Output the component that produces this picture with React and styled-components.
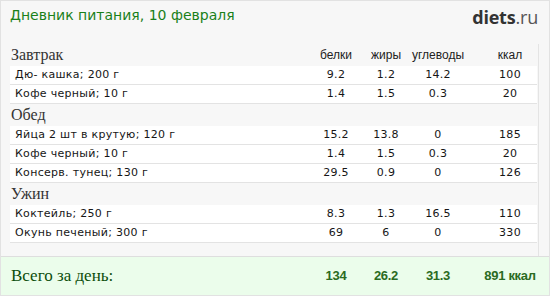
import styled, { createGlobalStyle } from 'styled-components'

const GlobalStyle = createGlobalStyle`
  html, body {
    margin: 0;
    padding: 0;
    background: #ffffff;
  }
`

const COLS = '301px 50px 50px 54px 18px 54px'

const Frame = styled.div`
  width: 550px;
  height: 296px;
  box-sizing: border-box;
  border: 1px solid #e2e2e2;
  background: #f7f7f7;
  display: flex;
  flex-direction: column;
  overflow: hidden;
`

const Header = styled.div`
  height: 41px;
  display: flex;
  justify-content: space-between;
  align-items: flex-start;
  padding: 4px 11px 0 9px;
`

const Title = styled.h1`
  margin: 0;
  font-family: 'DejaVu Sans', Verdana, sans-serif;
  font-weight: normal;
  font-size: 14px;
  line-height: 20px;
  color: #1a801a;
`

const Logo = styled.div`
  font-family: 'Open Sans', sans-serif;
  font-size: 18px;
  line-height: 24px;
  letter-spacing: -0.2px;
  color: #555;

  b {
    font-weight: 700;
    color: #333;
  }
`

const Content = styled.div`
  padding: 0 0 0 9px;
`

const HeadRow = styled.div`
  display: grid;
  grid-template-columns: ${COLS};
  height: 22px;
  align-items: center;
`

const Meal = styled.div`
  font-family: 'Liberation Serif', 'Times New Roman', serif;
  font-size: 16px;
  color: #333;
  padding-left: 1px;
`

const ColHead = styled.div`
  font-family: 'Liberation Sans', Arial, sans-serif;
  font-size: 12px;
  color: #222;
  text-align: center;
  grid-column: ${(p) => p.$col};
`

const Body = styled.div`
  width: 529px;
  box-sizing: border-box;
  border-right: 1px solid #e4e4e4;
  padding-bottom: 13px;
`

const Row = styled.div`
  display: grid;
  grid-template-columns: ${COLS};
  width: 527px;
  height: 18px;
  align-items: center;
  background: #ffffff;
  border-bottom: 1px solid #e3e3e3;
  font-family: 'DejaVu Sans', Verdana, sans-serif;
  font-size: 11px;
  letter-spacing: 0.3px;
  color: #161616;
`

const Name = styled.div`
  padding-left: 5px;
  white-space: nowrap;
`

const Num = styled.div`
  text-align: center;
  grid-column: ${(p) => p.$col};
`

const Total = styled.div`
  margin-top: auto;
  height: 40px;
  border-top: 1px solid #dedede;
  background: #ebfdeb;
  padding-left: 9px;
  display: grid;
  grid-template-columns: ${COLS};
  align-items: center;
`

const TotalLabel = styled.div`
  font-family: 'Liberation Serif', 'Times New Roman', serif;
  font-size: 17px;
  color: #0b4d0b;
  padding-left: 1px;
`

const TotalNum = styled.div`
  font-family: 'Liberation Sans', Arial, sans-serif;
  font-weight: bold;
  font-size: 13px;
  letter-spacing: -0.3px;
  color: #2a6b22;
  text-align: center;
  white-space: nowrap;
  grid-column: ${(p) => p.$col};
`

const meals = [
  {
    title: 'Завтрак',
    items: [
      ['Дю- кашка; 200 г', '9.2', '1.2', '14.2', '100'],
      ['Кофе черный; 10 г', '1.4', '1.5', '0.3', '20'],
    ],
  },
  {
    title: 'Обед',
    items: [
      ['Яйца 2 шт в крутую; 120 г', '15.2', '13.8', '0', '185'],
      ['Кофе черный; 10 г', '1.4', '1.5', '0.3', '20'],
      ['Консерв. тунец; 130 г', '29.5', '0.9', '0', '126'],
    ],
  },
  {
    title: 'Ужин',
    items: [
      ['Коктейль; 250 г', '8.3', '1.3', '16.5', '110'],
      ['Окунь печеный; 300 г', '69', '6', '0', '330'],
    ],
  },
]

const numCols = [2, 3, 4, 6]

export default function App() {
  return (
    <>
      <GlobalStyle />
      <Frame>
        <Header>
          <Title>Дневник питания, 10 февраля</Title>
          <Logo>
            <b>diets</b>.ru
          </Logo>
        </Header>
        <Content>
          <Body>
            {meals.map((meal, i) => (
              <div key={meal.title}>
                <HeadRow>
                  <Meal>{meal.title}</Meal>
                  {i === 0 && (
                    <>
                      <ColHead $col={2}>белки</ColHead>
                      <ColHead $col={3}>жиры</ColHead>
                      <ColHead $col={4}>углеводы</ColHead>
                      <ColHead $col={6}>ккал</ColHead>
                    </>
                  )}
                </HeadRow>
                {meal.items.map((item, j) => (
                  <Row key={j}>
                    <Name>{item[0]}</Name>
                    {item.slice(1).map((v, k) => (
                      <Num key={k} $col={numCols[k]}>
                        {v}
                      </Num>
                    ))}
                  </Row>
                ))}
              </div>
            ))}
          </Body>
        </Content>
        <Total>
          <TotalLabel>Всего за день:</TotalLabel>
          <TotalNum $col={2}>134</TotalNum>
          <TotalNum $col={3}>26.2</TotalNum>
          <TotalNum $col={4}>31.3</TotalNum>
          <TotalNum $col={6}>891 ккал</TotalNum>
        </Total>
      </Frame>
    </>
  )
}
